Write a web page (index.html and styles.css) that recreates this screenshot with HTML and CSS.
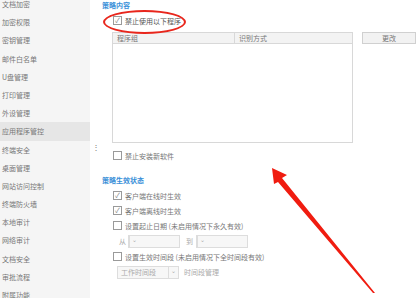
FILE: index.html
```html
<!DOCTYPE html>
<html>
<head>
	<meta charset="utf-8">
	<title>应用程序管控</title>
	<link rel="stylesheet" href="styles.css">
</head>
<body>

<div id="page">
	<ul id="menu">
		<li>文档加密</li>
		<li>加密权限</li>
		<li>密钥管理</li>
		<li>邮件白名单</li>
		<li>U盘管理</li>
		<li>打印管理</li>
		<li>外设管理</li>
		<li class="on">应用程序管控</li>
		<li>终端安全</li>
		<li>桌面管理</li>
		<li>网站访问控制</li>
		<li>终端防火墙</li>
		<li>本地审计</li>
		<li>网络审计</li>
		<li>文档安全</li>
		<li>审批流程</li>
		<li>附属功能</li>
	</ul>
	<div class="split">⋮</div>

	<div id="main">
		<h3>策略内容</h3>
		<div class="chk first"><span class="box ok">✓</span>禁止使用以下程序</div>

		<div class="tblrow">
			<div class="tbl">
				<div class="thead"><span class="c1">程序组</span><span class="c2">识别方式</span></div>
				<div class="tbody"></div>
			</div>
			<div class="btn">更改</div>
		</div>

		<div class="chk install"><span class="box"></span>禁止安装新软件</div>

		<h3 class="sec2">策略生效状态</h3>
		<div class="chk"><span class="box ok">✓</span>客户端在线时生效</div>
		<div class="chk"><span class="box ok">✓</span>客户端离线时生效</div>
		<div class="chk"><span class="box"></span>设置起止日期 (未启用情况下永久有效)</div>
		<div class="line dates">
			<span class="lbl">从</span><span class="sel w50"><i>⌄</i></span>
			<span class="lbl to">到</span><span class="sel w50"><i>⌄</i></span>
		</div>
		<div class="chk"><span class="box"></span>设置生效时间段 (未启用情况下全时间段有效)</div>
		<div class="line times">
			<span class="sel w60"><em>工作时间段</em><i>⌄</i></span>
			<span class="lbl mgr">时间段管理</span>
		</div>
	</div>
</div>

<div class="ring"></div>
<svg class="arrow" width="418" height="298" viewBox="0 0 418 298">
	<polygon points="272,168 287,175 282,178 375,293 373,293 278,182 274,184" fill="#f01c10"/>
</svg>

</body>
</html>
```

FILE: styles.css
```css
html,body{
	height:100%;
}
body{
	margin:0; background:#fff;
	font-family:"Noto Sans CJK SC","Liberation Sans",sans-serif;
	font-size:7px; color:#666;
	overflow:hidden;
}
ul,li,h3{
	margin:0; padding:0; list-style:none;
}

#page{
	display:flex; height:100%;
}

/*左侧菜单*/
#menu{
	width:90px; flex:none; margin-top:-5px;
	background:#f5f5f5;
}
#menu li{
	height:18.2px; line-height:18px; padding-left:2px;
	color:#777; white-space:nowrap;
}
#menu li.on{
	background:#e6e6e6;
}
.split{
	width:12px; flex:none;
	padding-top:143px; text-align:center;
	font-size:8px; color:#777; line-height:8px;
}

/*右侧内容*/
#main{
	flex:1; padding-top:0;
}
#main h3{
	font-size:7px; font-weight:bold; color:#3a8fd8; line-height:11px;
}
#main .sec2{
	margin-top:12px; margin-bottom:2px;
}
.chk{
	display:flex; align-items:center;
	height:15px; padding-left:11px;
	color:#777; white-space:nowrap;
}
.chk.first{
	margin-top:2px; color:#555;
}
.chk.install{
	margin-top:5px;
}
.box{
	width:7px; height:7px; margin-right:3px;
	border:1px solid #9a9a9a; background:#fff;
	font-size:7px; line-height:7px; text-align:center; color:#888;
}

/*表格*/
.tblrow{
	display:flex; align-items:flex-start;
	margin:4px 0 0 10px;
}
.tbl{
	width:239px; border:1px solid #d8d8d8;
}
.thead{
	display:flex; height:10px; line-height:10px;
	background:#f3f3f3; border-bottom:1px solid #d8d8d8;
	color:#777;
}
.thead .c1{
	width:117px; padding-left:4px; border-right:1px solid #d8d8d8;
}
.thead .c2{
	padding-left:4px;
}
.tbody{
	height:98px;
}
.btn{
	width:52px; height:10px; margin-left:9px;
	border:1px solid #d0d0d0; background:#f2f2f2;
	line-height:10px; text-align:center; color:#777;
}

/*日期和时间段*/
.line{
	display:flex; align-items:center; height:16px;
	padding-left:17px;
}
.lbl{
	color:#aaa; margin-right:2px;
}
.lbl.to{
	margin-left:6px; margin-right:3px;
}
.lbl.mgr{
	margin-left:5px;
}
.line.times{
	padding-left:15px;
}
.sel{
	display:flex; justify-content:space-between; align-items:center;
	height:11px; border:1px solid #ddd; background:#f7f7f7;
}
.sel.w50{
	width:50px;
}
.sel.w60{
	width:60px;
}
.sel em{
	font-style:normal; color:#aaa; padding-left:3px;
}
.sel i{
	width:9px; height:11px; border-left:1px solid #ddd;
	font-style:normal; font-size:6px; line-height:7px; text-align:center; color:#aaa;
}

/*标注*/
.ring{
	position:absolute; left:103px; top:10px;
	width:79px; height:20px;
	border:2px solid #e8261c; border-radius:50%;
}
.arrow{
	position:absolute; left:0; top:0;
}
```
